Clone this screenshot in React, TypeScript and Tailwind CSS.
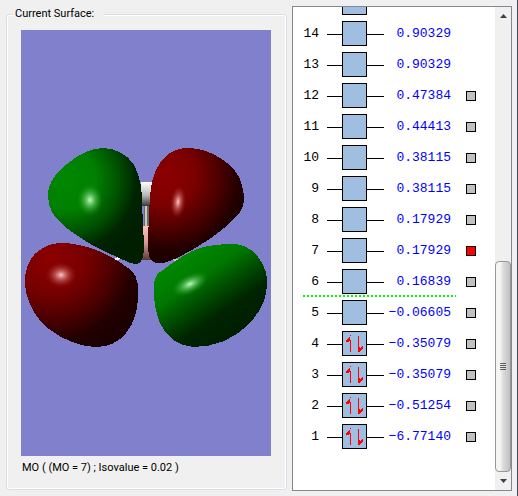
interface Orbital {
  id: number;
  energy: string;
  occupied?: boolean;
  selectable?: boolean;
}

const orbitals: Orbital[] = [
  { id: 14, energy: "0.90329" },
  { id: 13, energy: "0.90329" },
  { id: 12, energy: "0.47384", selectable: true },
  { id: 11, energy: "0.44413", selectable: true },
  { id: 10, energy: "0.38115", selectable: true },
  { id: 9, energy: "0.38115", selectable: true },
  { id: 8, energy: "0.17929", selectable: true },
  { id: 7, energy: "0.17929", selectable: true },
  { id: 6, energy: "0.16839", selectable: true },
  { id: 5, energy: "−0.06605", selectable: true },
  { id: 4, energy: "−0.35079", selectable: true, occupied: true },
  { id: 3, energy: "−0.35079", selectable: true, occupied: true },
  { id: 2, energy: "−0.51254", selectable: true, occupied: true },
  { id: 1, energy: "−6.77140", selectable: true, occupied: true },
];

const CURRENT_MO = 7;
const DIVIDER_AFTER = 6;

const SpinPair = () => (
  <svg viewBox="0 0 23 23" className="size-full" shapeRendering="crispEdges" aria-hidden="true">
    <path d="M7 3h1v17h-1zM8 3L3 9v1h2l3-3z" fill="#ff0000" />
    <path d="M15 4h1v16h-1zM15 20v-5h1l1 1l3-2v2l-4 4z" fill="#ff0000" />
  </svg>
);

const OrbitalBox = ({ occupied }: { occupied?: boolean }) => (
  <div className="size-[25px] shrink-0 border border-black bg-[#a0bfe0]">
    {occupied && <SpinPair />}
  </div>
);

const OrbitalRow = ({ id, energy, occupied, selectable }: Orbital) => (
  <li className="flex h-[31px] shrink-0 items-center">
    <label htmlFor={`mo-${id}`} className="w-4 text-right">
      {id}
    </label>
    <span className="ml-2 mt-px h-px w-[15px] bg-black" />
    <OrbitalBox occupied={occupied} />
    <span className="mt-px h-px w-[17px] bg-black" />
    <span className="w-[67px] text-right text-[#0000ff]">{energy}</span>
    {selectable && (
      <input
        id={`mo-${id}`}
        type="checkbox"
        defaultChecked={id === CURRENT_MO}
        className="ml-[15px] mt-px size-[10px] appearance-none border border-black bg-[#c0c0c0] checked:bg-[#ff0000]"
      />
    )}
  </li>
);

const ScrollBar = () => (
  <div className="flex w-4 shrink-0 flex-col bg-[#f0f0f0]">
    <button aria-label="Scroll up" className="flex h-[17px] items-center justify-center">
      <svg viewBox="0 0 7 4" className="h-1 w-[7px]">
        <path d="M3.5 0L7 4H0z" fill="#404040" />
      </svg>
    </button>
    <div className="flex flex-1 flex-col justify-end">
      <div className="flex h-[47%] flex-col items-center justify-center gap-px rounded-sm border border-[#979797] bg-linear-to-r from-[#f5f5f5] from-30% via-[#dcdcdc] via-50% to-[#c0c0c0]">
        <span className="h-px w-[6px] bg-[#606060]" />
        <span className="h-px w-[6px] bg-[#606060]" />
        <span className="h-px w-[6px] bg-[#606060]" />
        <span className="h-px w-[6px] bg-[#606060]" />
      </div>
    </div>
    <button aria-label="Scroll down" className="flex h-[18px] items-center justify-center">
      <svg viewBox="0 0 7 4" className="h-1 w-[7px]">
        <path d="M3.5 4L7 0H0z" fill="#404040" />
      </svg>
    </button>
  </div>
);

const Surface = () => (
  <svg
    viewBox="21 30 250 426"
    role="img"
    aria-label="Molecular orbital surface"
    className="min-h-0 w-full flex-1 bg-[#8080cc]"
  >
    <defs>
      <radialGradient id="greenTop" gradientUnits="userSpaceOnUse" cx="66" cy="180" r="86">
        <stop offset="0" stopColor="#008800" />
        <stop offset="0.35" stopColor="#008000" />
        <stop offset="0.62" stopColor="#005000" />
        <stop offset="0.82" stopColor="#002400" />
        <stop offset="1" stopColor="#001e00" />
      </radialGradient>
      <radialGradient id="redTop" gradientUnits="userSpaceOnUse" cx="165" cy="176" r="84">
        <stop offset="0" stopColor="#8c0000" />
        <stop offset="0.35" stopColor="#7c0000" />
        <stop offset="0.65" stopColor="#4c0000" />
        <stop offset="0.88" stopColor="#220000" />
        <stop offset="1" stopColor="#1c0000" />
      </radialGradient>
      <radialGradient id="redBottom" gradientUnits="userSpaceOnUse" cx="52" cy="258" r="98">
        <stop offset="0" stopColor="#8c0000" />
        <stop offset="0.35" stopColor="#780000" />
        <stop offset="0.62" stopColor="#4c0000" />
        <stop offset="0.84" stopColor="#220000" />
        <stop offset="1" stopColor="#1c0000" />
      </radialGradient>
      <linearGradient id="greenBottom" gradientUnits="userSpaceOnUse" x1="180" y1="257" x2="232" y2="334">
        <stop offset="0" stopColor="#008800" />
        <stop offset="0.3" stopColor="#007800" />
        <stop offset="0.55" stopColor="#004800" />
        <stop offset="0.75" stopColor="#002400" />
        <stop offset="1" stopColor="#001e00" />
      </linearGradient>
      <radialGradient id="shineGreen">
        <stop offset="0" stopColor="#b8ffb8" />
        <stop offset="0.35" stopColor="#70cc70" stopOpacity="0.75" />
        <stop offset="1" stopColor="#109010" stopOpacity="0" />
      </radialGradient>
      <radialGradient id="shineRed">
        <stop offset="0" stopColor="#ffc8c8" />
        <stop offset="0.35" stopColor="#d07070" stopOpacity="0.75" />
        <stop offset="1" stopColor="#901010" stopOpacity="0" />
      </radialGradient>
      <linearGradient id="cap" x1="0" y1="0" x2="0" y2="1">
        <stop offset="0" stopColor="#ffffff" />
        <stop offset="0.55" stopColor="#b8b8b8" />
        <stop offset="1" stopColor="#383838" />
      </linearGradient>
      <linearGradient id="core" x1="0" y1="0" x2="0" y2="1">
        <stop offset="0" stopColor="#ffc0c0" />
        <stop offset="0.5" stopColor="#d89898" />
        <stop offset="1" stopColor="#583838" />
      </linearGradient>
    </defs>

    {/* atoms and bonds behind the lobes */}
    <g shapeRendering="crispEdges">
      <rect x="141" y="182" width="11" height="24" fill="url(#cap)" />
      <rect x="144" y="206" width="5" height="20" fill="#686868" />
      <rect x="145" y="206" width="2" height="20" fill="#c8c8c8" />
      <rect x="142" y="226" width="9" height="34" fill="url(#core)" />
      <path d="M114 261L120 257" stroke="#ffffff" strokeWidth="3" />
      <path d="M172 257L177 261" stroke="#c8c8b8" strokeWidth="3" />
    </g>

    <g shapeRendering="crispEdges">
      <path
        d="M103 148C113 148 127 153 134 165C140 176 142 188 142 203L144 245C144 257 142 264 136 264C130 264 122 259 115 256C102 251 92 245 84 240C73 233 66 228 60 222C54 216 48 209 48 196C48 180 58 172 67 164C76 156 90 148 103 148Z"
        fill="url(#greenTop)"
      />
      <path
        d="M187 148C200 148 211 152 220 158C232 165 239 174 242 185C245 197 245 207 238 215C229 224 219 233 208 240C197 247 183 256 170 261C162 264 154 265 150 258C148 254 148 245 148 237C149 221 149 203 151 187C153 174 158 164 165 157C171 151 179 148 187 148Z"
        fill="url(#redTop)"
      />
      <path
        d="M62 243C73 243 86 246 96 250C107 254 119 261 128 268C136 273 139 281 138 297C138 309 134 324 126 333C118 343 108 347 95 347C79 346 63 340 49 329C35 318 25 300 25 281C25 268 30 256 40 250C47 245 54 243 62 243Z"
        fill="url(#redBottom)"
      />
      <path
        d="M230 244C243 243 254 250 260 260C265 267 267 274 267 284C267 300 260 312 248 325C233 340 213 347 193 347C178 346 166 337 160 323C155 310 153 298 154 283C155 276 158 273 163 270C176 260 189 251 203 247C212 245 221 244 230 244Z"
        fill="url(#greenBottom)"
      />
    </g>

    <ellipse cx="90" cy="200" rx="13" ry="16" fill="url(#shineGreen)" />
    <ellipse cx="178" cy="202" rx="8" ry="17" fill="url(#shineRed)" transform="rotate(6 178 202)" />
    <ellipse cx="61" cy="275" rx="16" ry="13" fill="url(#shineRed)" />
    <ellipse cx="190" cy="284" rx="20" ry="10" fill="url(#shineGreen)" transform="rotate(-26 190 284)" />
  </svg>
);

export default function App() {
  return (
    <main className="flex h-screen gap-[5px] border-r border-[#3c4c66] bg-[#f0f0f0] pt-[6px] pr-[5px] pb-[5px] pl-[6px] font-[Roboto,sans-serif] text-[11px] leading-4 text-black">
      <fieldset className="mb-px flex min-w-0 flex-1 flex-col rounded-[3px] border border-[#d5dfe5] pr-[15px] pl-[14px] shadow-[inset_0_0_0_1px_#ffffff]">
        <legend className="-ml-2 bg-[#f0f0f0] pr-[10px] pl-[2px]">Current Surface:</legend>
        <div className="flex min-h-0 flex-1 flex-col pt-2">
          <Surface />
          <p className="mt-1 mb-[13px] pl-px">MO ( (MO = 7) ; Isovalue = 0.02 )</p>
        </div>
      </fieldset>

      <section
        aria-label="Orbitals"
        className="flex w-[220px] shrink-0 overflow-hidden border border-[#828790] bg-white"
      >
        <ul className="flex flex-1 flex-col justify-end overflow-hidden pb-[38px] pl-[10px] font-['Liberation_Mono',monospace] text-[13px]">
          <li className="flex h-[31px] shrink-0 items-center pl-[39px]">
            <OrbitalBox />
          </li>
          {orbitals.map((orbital) => (
            <div key={orbital.id} className="contents">
              <OrbitalRow {...orbital} />
              {orbital.id === DIVIDER_AFTER && (
                <li
                  role="separator"
                  className="-mt-[2px] h-[2px] w-[153px] shrink-0 bg-[repeating-linear-gradient(90deg,#00ff00_0_2px,transparent_2px_4px)]"
                />
              )}
            </div>
          ))}
        </ul>
        <ScrollBar />
      </section>
    </main>
  );
}
